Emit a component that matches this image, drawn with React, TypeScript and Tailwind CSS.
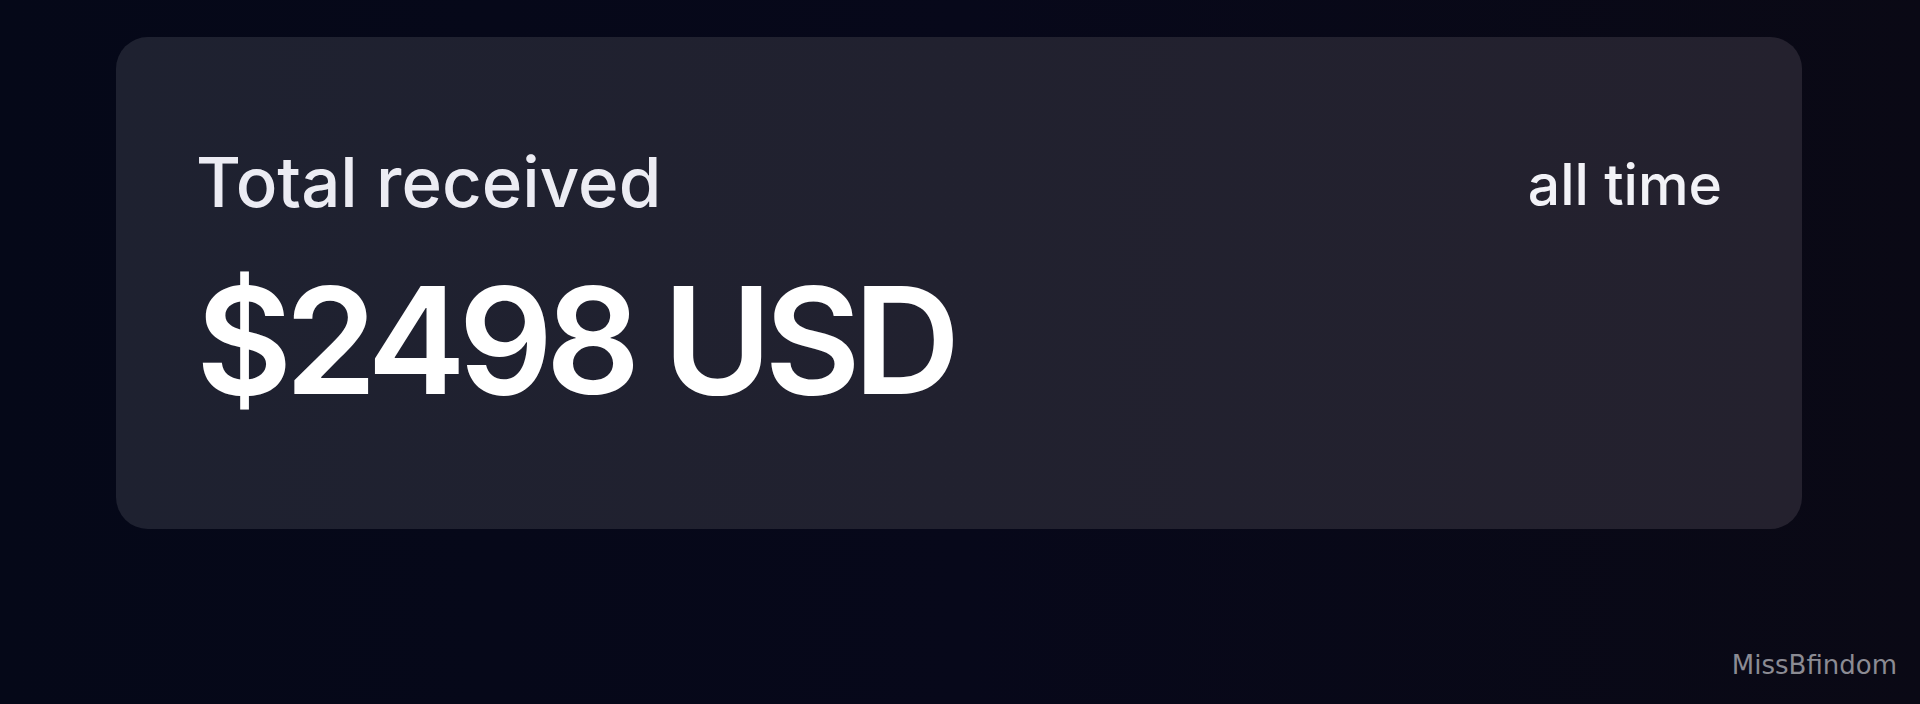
export default function App() {
    return (
        <div
            className="relative h-[704px] w-full overflow-hidden bg-gradient-to-r from-[#050818] via-[#07081a] to-[#0a0915]"
            style={{ fontFamily: 'Inter, "Noto Sans", sans-serif' }}
        >
            <div className="pt-[37px] pl-[116px] pr-[118px]">
                <div className="h-[492px] rounded-[32px] bg-gradient-to-r from-[#1e2130] to-[#24212e] pl-[80px] pr-[80px] pt-[111px]">
                    <div className="flex items-start justify-between">
                        <span className="text-[69px] font-medium leading-none text-[#ececf3]">Total received</span>
                        <span className="mt-[8px] text-[57px] font-medium leading-none text-[#f2f2f7]">all time</span>
                    </div>
                    <div className="mt-[50px] text-[148px] font-semibold leading-none tracking-[-0.05em] text-white">
                        $2498 USD
                    </div>
                </div>
            </div>
            <span
                className="absolute bottom-[26px] right-[23px] text-[26px] leading-none text-[#8b8b93]"
                style={{ fontFamily: '"DejaVu Sans", sans-serif' }}
            >
                MissBfindom
            </span>
        </div>
    )
}
